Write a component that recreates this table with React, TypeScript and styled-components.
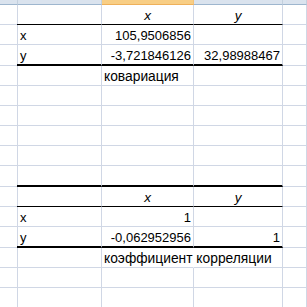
import React from 'react';
import styled, { createGlobalStyle } from 'styled-components';

const GlobalStyle = createGlobalStyle`
  html, body { margin: 0; padding: 0; background: #ffffff; }
  body {
    width: 307px;
    height: 307px;
    overflow: hidden;
    font-family: "Liberation Sans", Arial, sans-serif;
  }
`;

type Edge = 'grid' | 'thin' | 'thick';
type Align = 'left' | 'right' | 'center';

interface CellData {
  text?: string;
  align?: Align;
  italic?: boolean;
  spill?: boolean;
  label?: boolean;
}

interface RowData {
  edge: Edge;
  b?: CellData;
  c?: CellData;
  d?: CellData;
}

const GRID = '#d0d7e5';

const Sheet = styled.div`
  display: grid;
  grid-template-columns: 18px 84px 92px 89px 1fr;
  width: 307px;
  height: 307px;
  overflow: hidden;
  background: #ffffff;
`;

const HeaderCell = styled.div<{ $selected?: boolean }>`
  box-sizing: border-box;
  height: 5px;
  border-right: 1px solid ${(p) => (p.$selected ? '#f2c27a' : '#c3d0de')};
  border-bottom: 1px solid ${(p) => (p.$selected ? '#eeb05a' : '#9eb6ce')};
  background: ${(p) => (p.$selected ? '#f8ce85' : '#dae3ee')};
`;

const edgeBorder = (e: Edge) =>
  e === 'grid' ? `1px solid ${GRID}` : e === 'thin' ? '1px solid #000000' : '2px solid #000000';

const Cell = styled.div<{
  $edge: Edge;
  $h: number;
  $align: Align;
  $italic?: boolean;
  $spill?: boolean;
  $label?: boolean;
}>`
  position: relative;
  box-sizing: border-box;
  height: ${(p) => p.$h}px;
  border-right: 1px solid ${(p) => (p.$spill ? 'transparent' : GRID)};
  border-bottom: ${(p) => edgeBorder(p.$edge)};
  display: flex;
  align-items: flex-end;
  justify-content: ${(p) => (p.$align === 'right' ? 'flex-end' : p.$align === 'center' ? 'center' : 'flex-start')};
  padding: 0 2px 1px 2px;
  font-size: ${(p) => (p.$label ? '13.8px' : p.$italic ? '13.5px' : '13px')};
  line-height: 15px;
  font-style: ${(p) => (p.$italic ? 'italic' : 'normal')};
  color: #000000;
  white-space: nowrap;
  overflow: visible;
  z-index: ${(p) => (p.$spill ? 1 : 0)};
`;

const Edge1 = styled.span<{ $edge: Edge }>`
  position: absolute;
  left: -1px;
  bottom: ${(p) => (p.$edge === 'thick' ? -2 : -1)}px;
  width: 1px;
  height: ${(p) => (p.$edge === 'thick' ? 2 : 1)}px;
  background: #000000;
`;

const rows: RowData[] = [
  { edge: 'thin', c: { text: 'x', align: 'center', italic: true }, d: { text: 'y', align: 'center', italic: true } },
  { edge: 'grid', b: { text: 'x' }, c: { text: '105,9506856', align: 'right' } },
  { edge: 'thick', b: { text: 'y' }, c: { text: '-3,721846126', align: 'right' }, d: { text: '32,98988467', align: 'right' } },
  { edge: 'grid', c: { text: 'ковариация', label: true } },
  { edge: 'grid' },
  { edge: 'grid' },
  { edge: 'grid' },
  { edge: 'grid' },
  { edge: 'thick' },
  { edge: 'thin', c: { text: 'x', align: 'center', italic: true }, d: { text: 'y', align: 'center', italic: true } },
  { edge: 'grid', b: { text: 'x' }, c: { text: '1', align: 'right' } },
  { edge: 'thick', b: { text: 'y' }, c: { text: '-0,062952956', align: 'right' }, d: { text: '1', align: 'right' } },
  { edge: 'grid', c: { text: 'коэффициент корреляции', spill: true, label: true } },
  { edge: 'grid' },
  { edge: 'grid' },
];

export default function App() {
  return (
    <>
      <GlobalStyle />
      <Sheet>
        <HeaderCell />
        <HeaderCell />
        <HeaderCell $selected />
        <HeaderCell />
        <HeaderCell />
        {rows.map((r, i) => {
          const h = r.edge === 'thick' ? 21 : 20;
          const inner = [r.b, r.c, r.d];
          return (
            <React.Fragment key={i}>
              <Cell $edge="grid" $h={h} $align="left" />
              {inner.map((cd, j) => (
                <Cell
                  key={j}
                  $edge={r.edge}
                  $h={h}
                  $align={cd?.align ?? 'left'}
                  $italic={cd?.italic}
                  $spill={cd?.spill}
                  $label={cd?.label}
                >
                  {j === 0 && r.edge !== 'grid' ? <Edge1 $edge={r.edge} /> : null}
                  {cd?.text}
                </Cell>
              ))}
              <Cell $edge="grid" $h={h} $align="left" />
            </React.Fragment>
          );
        })}
      </Sheet>
    </>
  );
}
